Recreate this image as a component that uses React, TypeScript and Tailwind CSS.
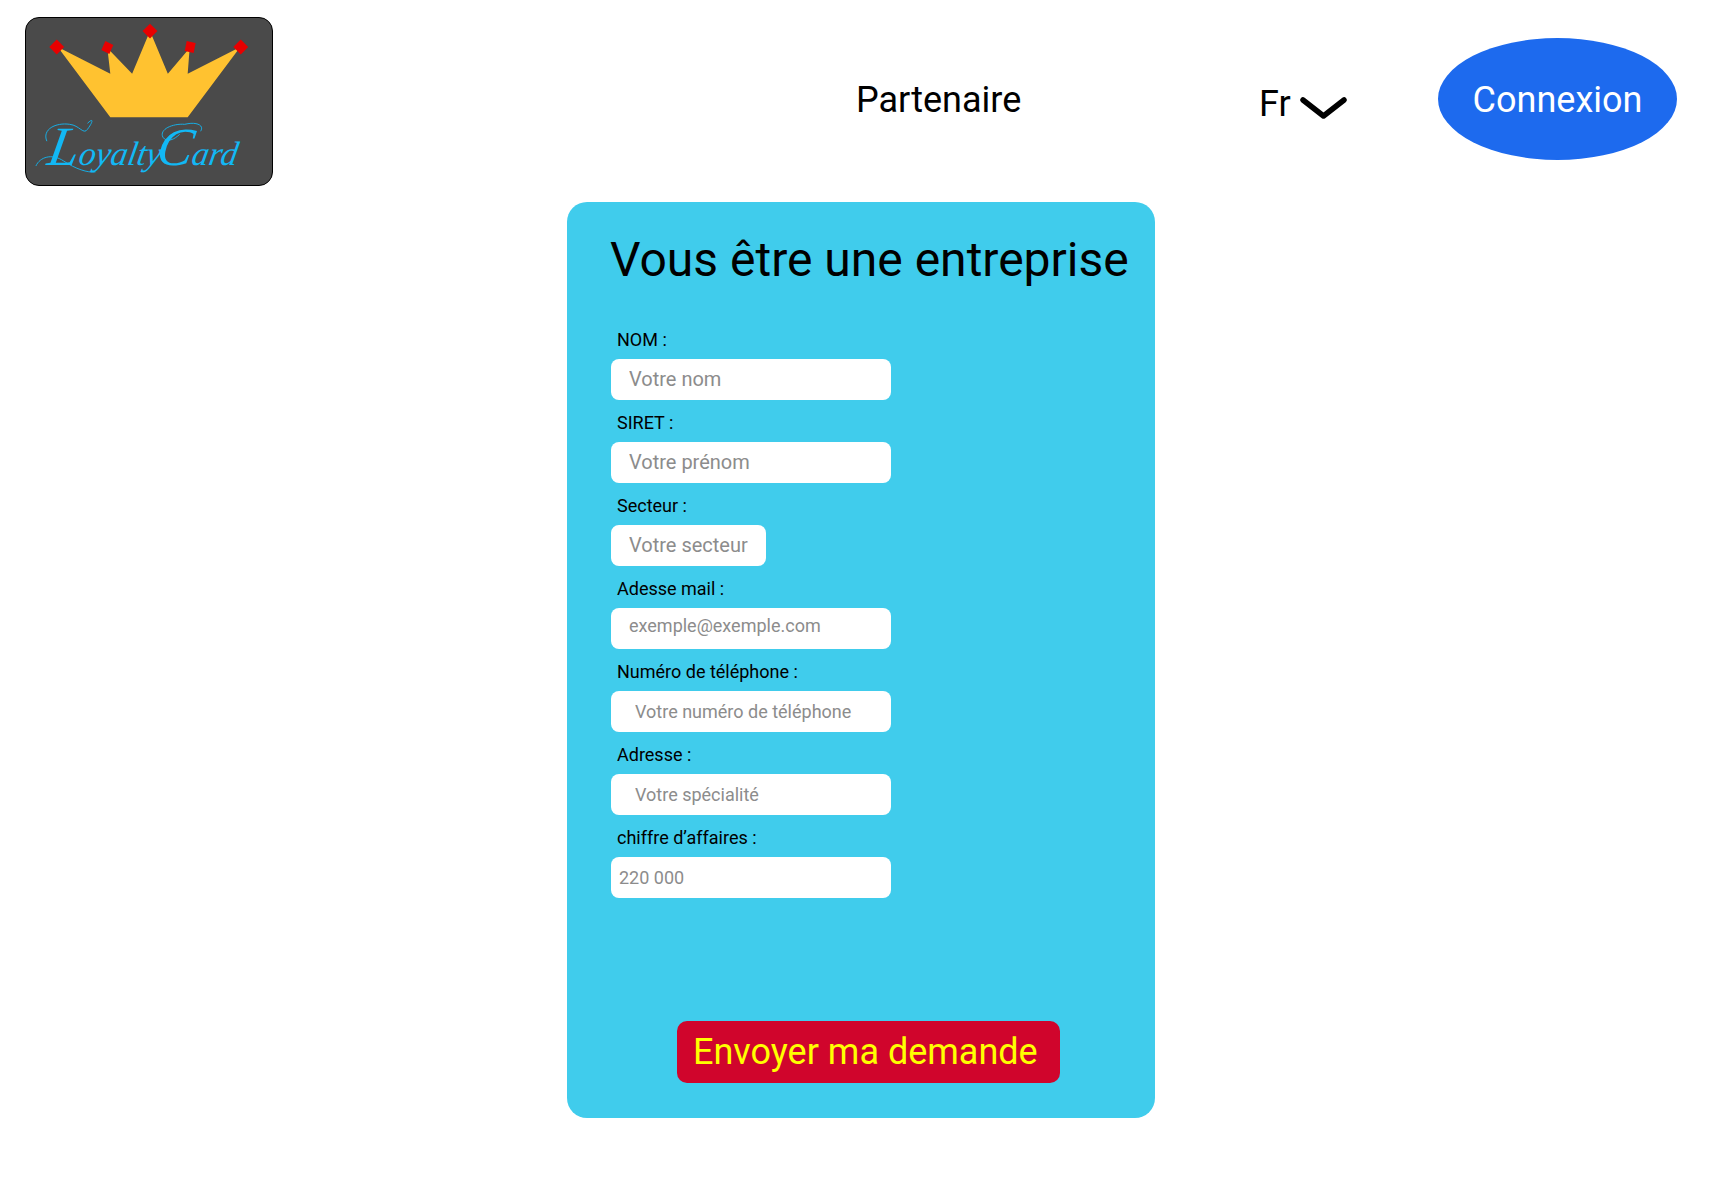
const fields = [
    { label: "NOM :", placeholder: "Votre nom", className: "w-[280px] pl-[18px] pb-[2px] text-[20px]" },
    { label: "SIRET :", placeholder: "Votre prénom", className: "w-[280px] pl-[18px] pb-[2px] text-[20px]" },
    { label: "Secteur :", placeholder: "Votre secteur", className: "w-[155px] pl-[18px] pb-[2px] text-[20px]" },
    { label: "Adesse mail :", placeholder: "exemple@exemple.com", className: "w-[280px] pl-[18px] pb-[6px] text-[18px]" },
    { label: "Numéro de téléphone :", placeholder: "Votre numéro de téléphone", className: "w-[280px] pl-[24px] text-[18px]" },
    { label: "Adresse :", placeholder: "Votre spécialité", className: "w-[280px] pl-[24px] text-[18px]" },
    { label: "chiffre d’affaires :", placeholder: "220 000", className: "w-[280px] pl-[8px] text-[18px]" },
];

function Logo() {
    return (
        <div className="w-[248px] h-[169px] shrink-0 rounded-[14px] border border-black bg-[#4a4a4a] overflow-hidden">
            <svg viewBox="0 0 248 168" className="block w-full h-full">
                <polygon
                    points="32,29 85,56 82,30 107,56 125,13 143,56 165,30 163,56 216,29 163,100 85,100"
                    fill="#ffc230"
                />
                <g fill="#e80000">
                    <polygon points="31,21.500 38.500,29 31,36.500 23.500,29" />
                    <polygon points="80,23 88,27 84,36 76,32" />
                    <polygon points="125,5.500 132.500,13 125,20.500 117.500,13" />
                    <polygon points="162,23 171,25 169,35 160,33" />
                    <polygon points="216.500,21.500 224,29 216.500,36.500 209,29" />
                </g>
                <g fill="none" stroke="#12b8f5" strokeWidth="0.9">
                    <path d="M21 124 C16 112 30 105 44 107 C54 108 58 118 62 112 C68 104 68 100 62 106" />
                    <path d="M10 149 C14 140 26 136 38 144 C50 152 62 156 70 155" />
                    <path d="M160 107 C148 106 134 112 138 120 C142 126 150 122 155 117 M160 107 C172 104 180 108 176 114" />
                </g>
                <g transform="translate(26 0) skewX(-10)">
                    <text y="148" className="font-['Liberation_Serif'] italic fill-[#12b8f5]">
                        <tspan x="20" className="text-[56px]">L</tspan>
                        <tspan x="52" className="text-[34px]">oyalty</tspan>
                        <tspan x="130" className="text-[54px]">C</tspan>
                        <tspan x="166" className="text-[34px]">ard</tspan>
                    </text>
                </g>
            </svg>
        </div>
    );
}

export default function App() {
    return (
        <div className="min-h-[1190px] bg-white text-black font-['Roboto',sans-serif]">
            <header className="flex items-center pl-[25px] pt-[17px] h-[186px]">
                <Logo />
                <a className="ml-[583px] w-[403px] text-[36px] leading-none pb-[4px]">Partenaire</a>
                <div className="flex items-center w-[179px] pt-[4px]">
                    <span className="text-[36px] leading-none">Fr</span>
                    <svg viewBox="0 0 48 24" className="ml-[9px] w-[48px] h-[24px] mt-[11px]">
                        <path
                            d="M3 3 L23.500 19 L44 3"
                            fill="none"
                            stroke="black"
                            strokeWidth="5.5"
                            strokeLinecap="round"
                            strokeLinejoin="round"
                        />
                    </svg>
                </div>
                <button className="w-[239px] h-[122px] pt-[2px] rounded-[50%] bg-[#1d6aee] text-white text-[36px] -mt-[5px]">
                    Connexion
                </button>
            </header>

            <main className="ml-[567px] mt-[16px] w-[588px] h-[916px] rounded-[20px] bg-[#40ccec] pl-[44px]">
                <h1 className="-ml-[1px] pt-[29px] pb-[28px] text-[48px] leading-[58px] font-normal whitespace-nowrap">
                    Vous être une entreprise
                </h1>
                <form>
                    {fields.map((field) => (
                        <div key={field.label}>
                            <label className="flex items-center h-[42px] pl-[6px] pt-[3px] text-[18px]">
                                {field.label}
                            </label>
                            <input
                                type="text"
                                placeholder={field.placeholder}
                                className={`block h-[41px] rounded-[8px] bg-white placeholder:text-[#8c8c8c] outline-none ${field.className}`}
                            />
                        </div>
                    ))}
                    <button
                        type="button"
                        className="block ml-[66px] mt-[123px] w-[383px] h-[62px] rounded-[10px] bg-[#d0052c] text-[#ffff00] text-[36px] text-left pl-[16px]"
                    >
                        Envoyer ma demande
                    </button>
                </form>
            </main>
        </div>
    );
}
